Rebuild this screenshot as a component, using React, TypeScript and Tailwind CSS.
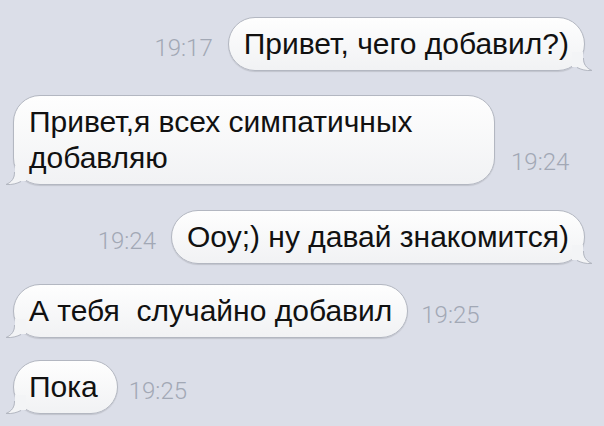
import React from "react";

type Side = "in" | "out";

// little curled tail at the bottom corner of a bubble
function Tail({ side }: { side: Side }) {
  return (
    <svg
      width="22"
      height="22"
      viewBox="0 0 22 22"
      className={[
        "absolute bottom-[-2px] pointer-events-none",
        side === "in" ? "left-[-10px]" : "right-[-10px] -scale-x-100",
      ].join(" ")}
    >
      <path d="M11 2 L11 9 C11 14 8 18 2 20.5 C8 21 13 19.5 17 17 L22 17 L22 2 Z" fill="#f3f4f6" />
      <path d="M10.5 8 C10.5 14 8 18 2 20.5 C8 21 13 19.5 17 17.5" fill="none" stroke="#b3b7c1" strokeWidth="1" />
    </svg>
  );
}

function Bubble({ side, children, className = "" }: { side: Side; children: React.ReactNode; className?: string }) {
  return (
    <div
      className={[
        "relative rounded-[27px] border border-[#b3b7c1] bg-gradient-to-b from-[#fefefe] to-[#f1f2f4]",
        "px-[15px] py-[8px] text-[30px] leading-[36px] text-[#111] whitespace-pre",
        "shadow-[0_1px_1px_rgba(0,0,0,0.12)] font-['Liberation_Sans',Arial,sans-serif]",
        className,
      ].join(" ")}
    >
      {children}
      <Tail side={side} />
    </div>
  );
}

function Time({ t }: { t: string }) {
  return (
    <span className="mb-[11px] font-['Roboto',sans-serif] font-light text-[24px] leading-none text-[#a2a8b5]">
      {t}
    </span>
  );
}

export default function App() {
  return (
    <div className="w-[604px] h-[426px] overflow-hidden bg-[#dbdee8] flex flex-col">
      <div className="mt-[17px] flex items-end justify-end gap-[15px] pr-[19px]">
        <Time t="19:17" />
        <Bubble side="out">Привет, чего добавил?)</Bubble>
      </div>

      <div className="mt-[24px] flex items-end gap-[16px] pl-[13px]">
        <Bubble side="in" className="w-[482px]">
          Привет,я всех симпатичных{"\n"}добавляю
        </Bubble>
        <Time t="19:24" />
      </div>

      <div className="mt-[25px] flex items-end justify-end gap-[15px] pr-[19px]">
        <Time t="19:24" />
        <Bubble side="out">Ооу;) ну давай знакомится)</Bubble>
      </div>

      <div className="mt-[20px] flex items-end gap-[13px] pl-[13px]">
        <Bubble side="in">А тебя  случайно добавил</Bubble>
        <Time t="19:25" />
      </div>

      <div className="mt-[22px] flex items-end gap-[11px] pl-[13px]">
        <Bubble side="in" className="pr-[19px]">Пока</Bubble>
        <Time t="19:25" />
      </div>
    </div>
  );
}
